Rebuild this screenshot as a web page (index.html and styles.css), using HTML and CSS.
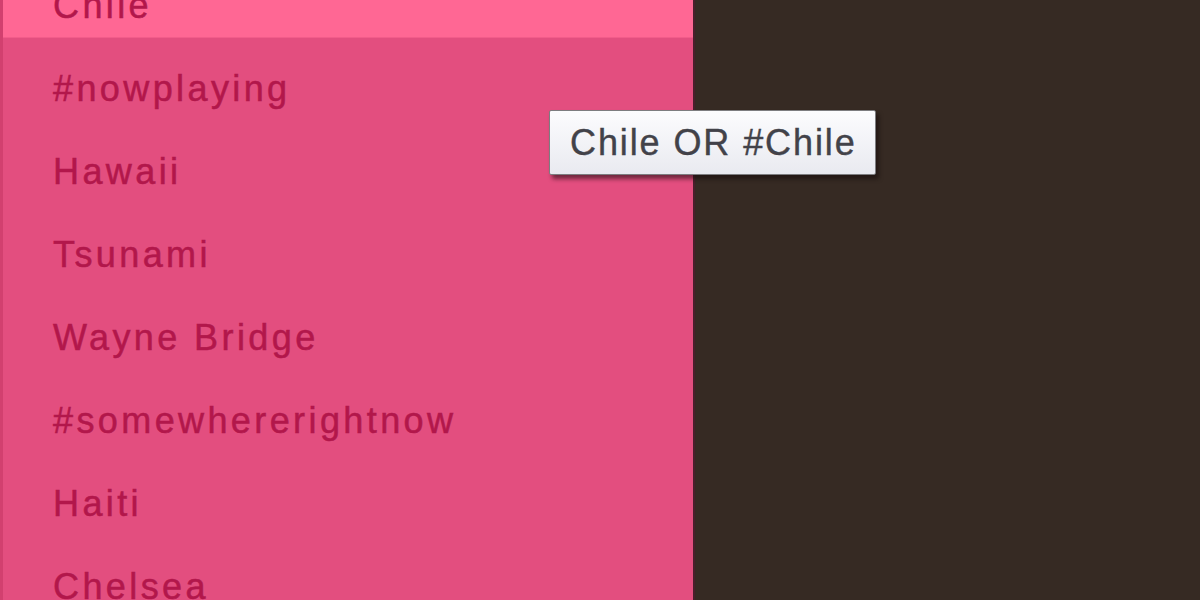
FILE: index.html
```html
<!DOCTYPE html>
<html>
<head>
<meta charset="utf-8">
<link rel="stylesheet" href="styles.css">
</head>
<body>
<div class="page">
  <div class="trends">
    <ul class="list">
      <li class="item active">Chile</li>
      <li class="item">#nowplaying</li>
      <li class="item">Hawaii</li>
      <li class="item">Tsunami</li>
      <li class="item">Wayne Bridge</li>
      <li class="item">#somewhererightnow</li>
      <li class="item">Haiti</li>
      <li class="item">Chelsea</li>
    </ul>
  </div>
  <div class="side"></div>
  <div class="tooltip">Chile OR #Chile</div>
</div>
</body>
</html>
```

FILE: styles.css
```css
html, body {
  margin: 0;
  padding: 0;
  height: 100%;
  overflow: hidden;
  background: #362a23;
}
.page {
  position: relative;
  display: flex;
  width: 1200px;
  height: 600px;
  overflow: hidden;
}
.trends {
  width: 690px;
  flex: none;
  background: #e34e7f;
  border-left: 3px solid #d2406f;
  box-shadow: 2px 0 1px #4a1f2c;
  position: relative;
  z-index: 1;
}
.list {
  list-style: none;
  margin: -45px 0 0 0;
  padding: 0;
}
.item {
  height: 83px;
  box-sizing: border-box;
  padding: 31px 0 0 50px;
  line-height: 40px;
  font-family: "Liberation Sans", Arial, sans-serif;
  font-size: 36px;
  letter-spacing: 3.4px;
  color: #b2174b;
  -webkit-text-stroke: 0.5px #b2174b;
}
.item.active {
  background: #ff6794;
  border-bottom: 1px solid #f25c8a;
}
.side {
  flex: 1;
  background: #362a23;
}
.tooltip {
  position: absolute;
  left: 549px;
  top: 110px;
  width: 327px;
  height: 65px;
  box-sizing: border-box;
  z-index: 2;
  border: 1px solid #7d7d80;
  border-radius: 2px;
  background: linear-gradient(#fcfcfe, #e9eaf0);
  box-shadow: 3px 4px 4px rgba(20, 10, 10, 0.55);
  font-family: "Liberation Sans", Arial, sans-serif;
  font-size: 36px;
  letter-spacing: 1.9px;
  color: #424249;
  -webkit-text-stroke: 0.4px #424249;
  line-height: 40px;
  padding: 12px 0 0 20px;
}
```
